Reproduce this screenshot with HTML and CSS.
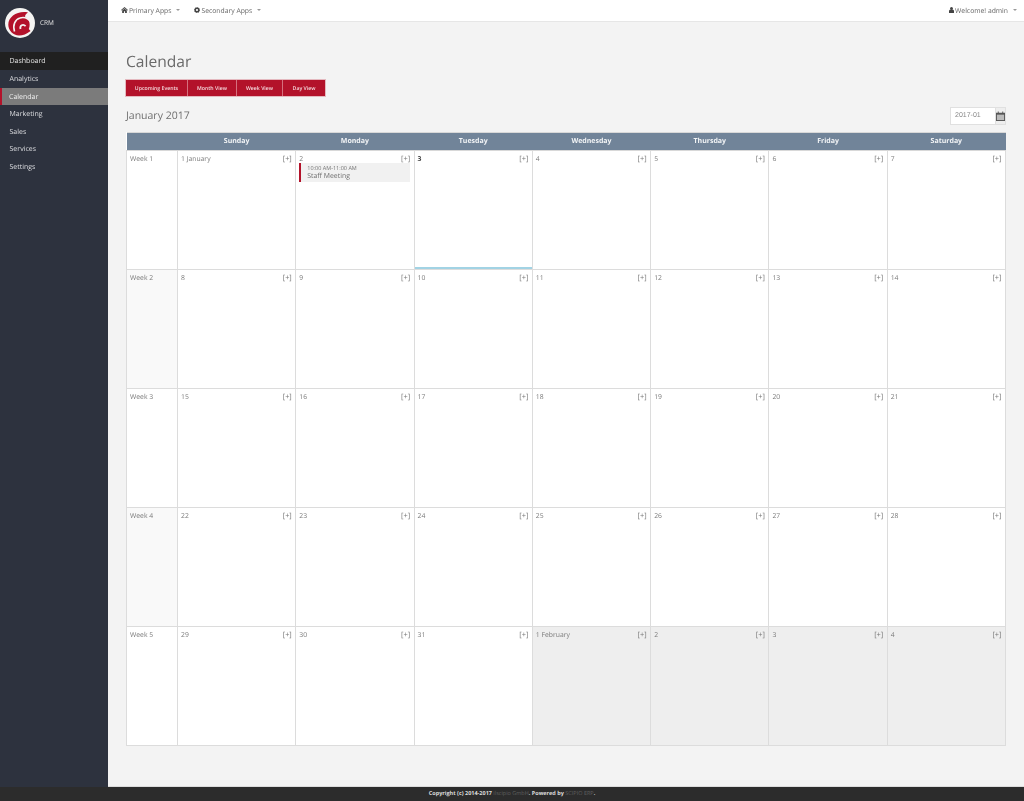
FILE: index.html
```html
<!DOCTYPE html>
<html lang="en">
<head>
<meta charset="utf-8">
<title>Calendar</title>
<link rel="stylesheet" href="styles.css">
</head>
<body>
<div class="shell">
  <aside class="sidebar">
    <div class="brand">
      <svg class="logo" viewBox="0 0 30 30" width="30" height="30">
        <circle cx="15" cy="15" r="15" fill="#f4f4f2"/>
        <path d="M23 4.5 C13 2.5 3.3 8.5 3.3 16.7 C3.3 22 8 27.5 14 27.5 C18 27.5 21.5 26 25.5 23 L23.8 21 C25 18 25 15 23.5 12 L20 8.5 C20 7 21 6 23 4.5 Z" fill="#b3122a"/>
        <path d="M9.5 23.5 C7.5 17 10 11.5 15 10 C19 8.7 23 10 26.5 14.5" fill="none" stroke="#f4f4f2" stroke-width="1.6"/>
        <path d="M15.5 21 C14.5 17.5 18 15.5 20.6 18.2" fill="none" stroke="#f4f4f2" stroke-width="1.8"/>
      </svg>
      <span class="brand-name">CRM</span>
    </div>
    <nav class="menu">
      <a class="menu-item is-dark">Dashboard</a>
      <a class="menu-item">Analytics</a>
      <a class="menu-item is-active">Calendar</a>
      <a class="menu-item">Marketing</a>
      <a class="menu-item">Sales</a>
      <a class="menu-item">Services</a>
      <a class="menu-item">Settings</a>
    </nav>
  </aside>
  <div class="main">
    <header class="topbar">
      <div class="top-left">
        <span class="top-link">
          <svg class="ico" viewBox="0 0 12 10" width="7" height="6"><path d="M6 0 L12 5 L11 6 L6 2 L1 6 L0 5 Z M2 6 L6 3 L10 6 V10 H7 V7 H5 V10 H2 Z" fill="#444"/></svg>
          <span>Primary Apps</span><i class="caret"></i>
        </span>
        <span class="top-link">
          <svg class="ico" viewBox="0 0 12 12" width="6" height="6"><circle cx="6" cy="6" r="3.7" fill="none" stroke="#444" stroke-width="3"/><circle cx="6" cy="6" r="5.2" fill="none" stroke="#444" stroke-width="1.6" stroke-dasharray="2 2.08"/></svg>
          <span>Secondary Apps</span><i class="caret"></i>
        </span>
      </div>
      <span class="top-link">
        <svg class="ico" viewBox="0 0 10 12" width="5" height="6"><circle cx="5" cy="3" r="3" fill="#444"/><path d="M0 12 V8 C0 6.5 1.5 5.5 3 5.5 H7 C8.5 5.5 10 6.5 10 8 V12 Z" fill="#444"/></svg>
        <span>Welcome! admin</span><i class="caret"></i>
      </span>
    </header>
    <main class="content">
      <h1 class="title">Calendar</h1>
      <div class="tabs">
        <a class="tab tab-upcoming">Upcoming Events</a>
        <a class="tab tab-month">Month View</a>
        <a class="tab tab-week">Week View</a>
        <a class="tab tab-day">Day View</a>
      </div>
      <div class="cal-head">
        <h2 class="month">January 2017</h2>
        <div class="picker">
          <span class="picker-input">2017-01</span>
          <span class="picker-btn">
            <svg viewBox="0 0 10 11" width="9" height="10"><path d="M0 2 H2 V0.5 H3 V2 H7 V0.5 H8 V2 H10 V11 H0 Z" fill="#555"/><path d="M1 4 H9 V10 H1 Z" fill="#bbb"/></svg>
          </span>
        </div>
      </div>
      <table class="cal">
        <thead>
          <tr>
            <th class="col-week"></th><th>Sunday</th><th>Monday</th><th>Tuesday</th><th>Wednesday</th><th>Thursday</th><th>Friday</th><th>Saturday</th>
          </tr>
        </thead>
        <tbody>
          <tr>
            <td class="wk">Week 1</td>
            <td><div class="cell-top"><span>1 January</span><span class="add">[+]</span></div></td>
            <td><div class="cell-top"><span>2</span><span class="add">[+]</span></div>
              <div class="event"><div class="event-time">10:00 AM-11:00 AM</div><div class="event-name">Staff Meeting</div></div></td>
            <td class="today"><div class="cell-top"><b class="today-num">3</b><span class="add">[+]</span></div></td>
            <td><div class="cell-top"><span>4</span><span class="add">[+]</span></div></td>
            <td><div class="cell-top"><span>5</span><span class="add">[+]</span></div></td>
            <td><div class="cell-top"><span>6</span><span class="add">[+]</span></div></td>
            <td><div class="cell-top"><span>7</span><span class="add">[+]</span></div></td>
          </tr>
          <tr>
            <td class="wk wk-alt">Week 2</td>
            <td><div class="cell-top"><span>8</span><span class="add">[+]</span></div></td>
            <td><div class="cell-top"><span>9</span><span class="add">[+]</span></div></td>
            <td><div class="cell-top"><span>10</span><span class="add">[+]</span></div></td>
            <td><div class="cell-top"><span>11</span><span class="add">[+]</span></div></td>
            <td><div class="cell-top"><span>12</span><span class="add">[+]</span></div></td>
            <td><div class="cell-top"><span>13</span><span class="add">[+]</span></div></td>
            <td><div class="cell-top"><span>14</span><span class="add">[+]</span></div></td>
          </tr>
          <tr>
            <td class="wk">Week 3</td>
            <td><div class="cell-top"><span>15</span><span class="add">[+]</span></div></td>
            <td><div class="cell-top"><span>16</span><span class="add">[+]</span></div></td>
            <td><div class="cell-top"><span>17</span><span class="add">[+]</span></div></td>
            <td><div class="cell-top"><span>18</span><span class="add">[+]</span></div></td>
            <td><div class="cell-top"><span>19</span><span class="add">[+]</span></div></td>
            <td><div class="cell-top"><span>20</span><span class="add">[+]</span></div></td>
            <td><div class="cell-top"><span>21</span><span class="add">[+]</span></div></td>
          </tr>
          <tr>
            <td class="wk wk-alt">Week 4</td>
            <td><div class="cell-top"><span>22</span><span class="add">[+]</span></div></td>
            <td><div class="cell-top"><span>23</span><span class="add">[+]</span></div></td>
            <td><div class="cell-top"><span>24</span><span class="add">[+]</span></div></td>
            <td><div class="cell-top"><span>25</span><span class="add">[+]</span></div></td>
            <td><div class="cell-top"><span>26</span><span class="add">[+]</span></div></td>
            <td><div class="cell-top"><span>27</span><span class="add">[+]</span></div></td>
            <td><div class="cell-top"><span>28</span><span class="add">[+]</span></div></td>
          </tr>
          <tr>
            <td class="wk">Week 5</td>
            <td><div class="cell-top"><span>29</span><span class="add">[+]</span></div></td>
            <td><div class="cell-top"><span>30</span><span class="add">[+]</span></div></td>
            <td><div class="cell-top"><span>31</span><span class="add">[+]</span></div></td>
            <td class="other"><div class="cell-top"><span>1 February</span><span class="add">[+]</span></div></td>
            <td class="other"><div class="cell-top"><span>2</span><span class="add">[+]</span></div></td>
            <td class="other"><div class="cell-top"><span>3</span><span class="add">[+]</span></div></td>
            <td class="other"><div class="cell-top"><span>4</span><span class="add">[+]</span></div></td>
          </tr>
        </tbody>
      </table>
    </main>
  </div>
</div>
<footer class="footer">
  Copyright (c) 2014-2017 <a class="foot-link">ilscipio GmbH</a>. Powered by <a class="foot-link">SCIPIO ERP</a>.
</footer>
</body>
</html>
```
FILE: styles.css
```css
* { box-sizing: border-box; }
html, body { margin: 0; padding: 0; }
body {
  font-family: "Open Sans", "Liberation Sans", sans-serif;
  font-size: 7px;
  color: #6f6f6f;
  background: #f3f3f3;
  height: 801px;
  overflow: hidden;
  text-rendering: geometricPrecision;
}
.shell { display: flex; height: 787px; will-change: opacity; }

.sidebar { width: 108px; flex: none; background: #2d323e; }
.brand { display: flex; align-items: center; height: 52px; padding: 0 0 7px 5px; }
.logo { display: block; flex: none; }
.brand-name { margin-left: 5px; color: #e0e0e0; font-size: 6.5px; }
.menu { display: flex; flex-direction: column; }
.menu-item {
  height: 17.6px;
  line-height: 17.6px;
  padding: 1px 0 0 9.5px;
  font-size: 7px;
  color: #dcdde0;
}
.is-dark { background: #202020; color: #e6e6e6; height: 18px; }
.is-active {
  background: #7b7b7b;
  color: #f0f0f0;
  border-left: 2.5px solid #b3122a;
  padding-left: 7px;
}

.main { flex: 1; min-width: 0; display: flex; flex-direction: column; border-bottom: 1px solid #dcdcdc; }
.topbar {
  display: flex;
  justify-content: space-between;
  align-items: center;
  height: 22px;
  flex: none;
  padding: 0 7px 1px 13px;
  background: #fff;
  border-bottom: 1px solid #e6e6e6;
  font-size: 6.8px;
  color: #666;
}
.top-left { display: flex; gap: 14px; }
.top-link { display: flex; align-items: center; }
.ico { margin-right: 1px; }
.caret {
  margin-left: 5px;
  width: 0; height: 0;
  border-left: 2.5px solid transparent;
  border-right: 2.5px solid transparent;
  border-top: 2.5px solid #999;
}

.content { flex: 1; padding: 0 18px 0 18px; }
.title {
  margin: 27px 0 0 0;
  height: 30px;
  line-height: 24px;
  font-size: 15.6px;
  font-weight: 400;
  color: #6a6a6a;
}
.tabs {
  display: flex;
  margin-left: -1px;
  width: max-content;
  height: 18px;
  border: 1px solid #e4b9bf;
  background: #b3122a;
}
.tab {
  display: flex;
  align-items: center;
  justify-content: center;
  height: 16px;
  font-size: 5.2px;
  font-weight: 600;
  color: #f5dadd;
  border-right: 1px solid #d5707e;
}
.tab-upcoming { width: 62px; }
.tab-month { width: 49px; }
.tab-week { width: 46px; }
.tab-day { width: 42px; border-right: 0; }

.cal-head {
  display: flex;
  justify-content: space-between;
  align-items: center;
  height: 35px;
  padding-top: 2px;
}
.month { margin: 0; font-size: 10.5px; font-weight: 400; color: #6f6f6f; }
.picker { display: flex; height: 18px; border: 1px solid #e0e0e0; background: #fff; }
.picker-input {
  width: 44px;
  padding-left: 4px;
  line-height: 16px;
  font-family: "Liberation Sans", sans-serif;
  font-size: 7px;
  color: #888;
}
.picker-btn {
  width: 10px;
  display: flex;
  align-items: center;
  justify-content: center;
  background: #eee;
  border-left: 1px solid #e0e0e0;
}

.cal {
  width: 880px;
  table-layout: fixed;
  border-collapse: collapse;
  background: #fff;
}
.cal th {
  height: 18px;
  padding: 0;
  background: #718499;
  border: 1px solid #d8d8d8;
  border-left: 0;
  border-right: 0;
  color: #f2f4f6;
  font-size: 7px;
  font-weight: 700;
  text-align: center;
}
.col-week { width: 51px; }
.cal td {
  height: 119px;
  padding: 3px 3.5px 3px 3px;
  vertical-align: top;
  border: 1px solid #dcdcdc;
  background: #fff;
  font-size: 6.8px;
  color: #7a7a7a;
}
.cal td.wk { padding-left: 3px; line-height: 9px; }
.cal td.wk-alt { background: #f9f9f9; }
.cal td.other { background: #eeeeee; }
.cal td.today { box-shadow: inset 0 -2px 0 #a2d3e4; }
.cell-top { display: flex; justify-content: space-between; align-items: baseline; height: 9px; line-height: 9px; }
.today-num { color: #444; font-weight: 700; }
.add { color: #777; font-size: 7.4px; }
.event {
  margin: 0;
  padding: 1px 0 1px 6px;
  height: 19px;
  background: #f1f1f1;
  border-left: 2px solid #b3122a;
}
.event-time { font-size: 5.5px; line-height: 8px; color: #777; }
.event-name { font-size: 6.9px; line-height: 9px; color: #707070; }

.footer {
  height: 14px;
  line-height: 13px;
  background: #2c2c2c;
  text-align: center;
  font-size: 5.5px;
  font-weight: 700;
  color: #dcdcdc;
  will-change: opacity;
}
.foot-link { color: #5f5f5f; font-weight: 400; }
```
